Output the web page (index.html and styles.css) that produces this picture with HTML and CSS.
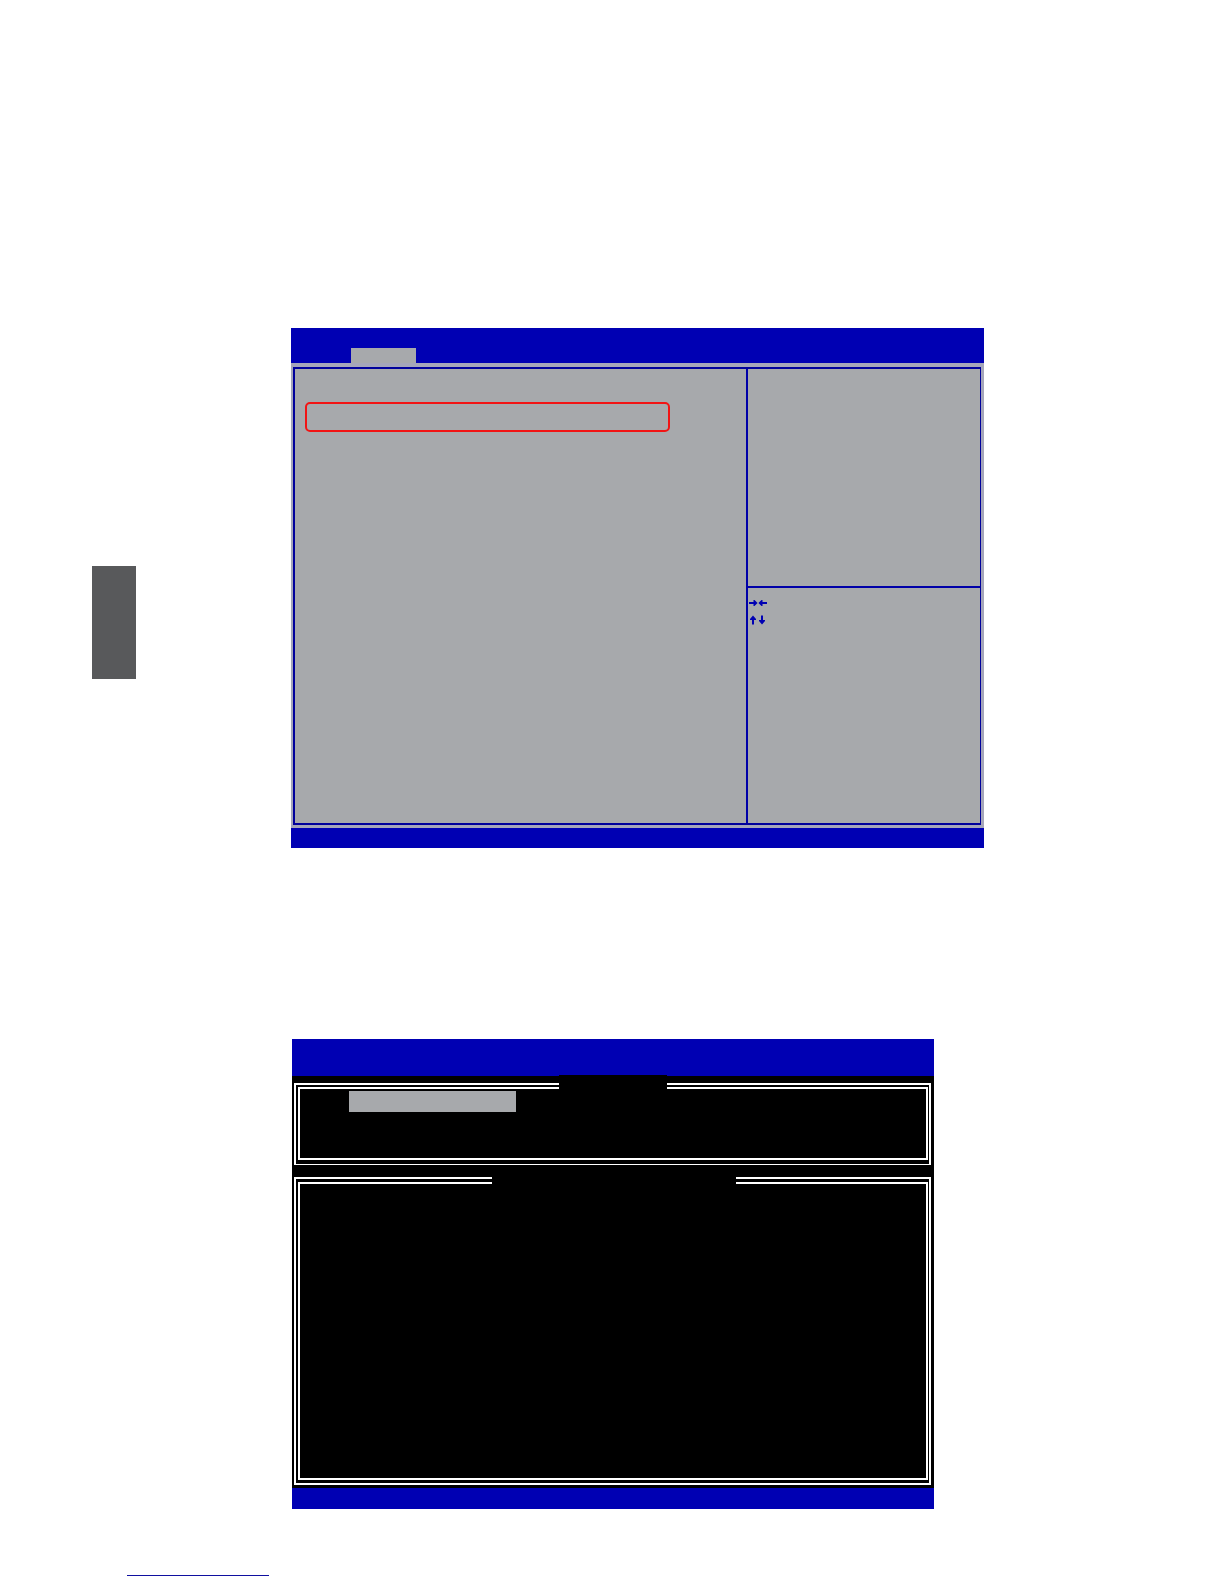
FILE: index.html
```
<!DOCTYPE html>
<html lang="en">
<head>
    <meta charset="UTF-8">
    <title>BIOS Setup</title>
    <link rel="stylesheet" href="styles.css">
</head>
<body>
    <div class="page">
        <aside class="side">
            <div class="chapter-tab"></div>
        </aside>

        <main class="content">
            <section class="bios">
                <header class="bios-header">
                    <div class="bios-tab"></div>
                </header>
                <div class="bios-body">
                    <div class="bios-frame">
                        <div class="settings">
                            <div class="highlight"></div>
                        </div>
                        <div class="help">
                            <div class="help-text"></div>
                            <div class="help-keys">
                                <svg class="arrows" width="18" height="10" viewBox="0 0 18 10" aria-hidden="true">
                                    <path d="M0 4h4.500V2H5.500L8.600 5 5.500 8H4.500V6H0zM18 4h-4.500V2h-1L9.400 5l3.100 3h1V6H18z"/>
                                </svg>
                                <svg class="arrows" width="18" height="10" viewBox="0 0 18 10" aria-hidden="true">
                                    <path d="M3 9.500V5H1V4L4 .5 7 4v1H5v4.500zM12 .5V5h-2v1l3 3.500L16 6V5h-2V.5z"/>
                                </svg>
                            </div>
                        </div>
                    </div>
                </div>
                <footer class="bios-footer"></footer>
            </section>

            <section class="console">
                <header class="console-header"></header>
                <div class="console-body">
                    <div class="double-frame">
                        <div class="frame-title"></div>
                        <div class="frame-inner frame-short">
                            <div class="selected"></div>
                        </div>
                    </div>
                    <div class="double-frame frame-options">
                        <div class="frame-title title-wide"></div>
                        <div class="frame-inner frame-tall"></div>
                    </div>
                </div>
                <footer class="console-footer"></footer>
            </section>
        </main>
    </div>

    <a class="page-link" href="#" aria-label="Link"></a>
</body>
</html>
```

FILE: styles.css
```
* {
    box-sizing: border-box;
}

body {
    margin: 0;
    background-color: #fff;
    font-family: "Liberation Sans", Arial, sans-serif;
}

.page {
    display: grid;
    grid-template-columns: 136px 1fr;
    column-gap: 155px;
}

.side {
    padding: 566px 0 0 92px;
}

.chapter-tab {
    height: 113px;
    background-color: #58595b;
}

.content {
    padding-top: 328px;
}

/* setup screen */
.bios {
    margin-right: 240px;
    background-color: #a7a9ac;
}

.bios-header {
    display: flex;
    align-items: flex-end;
    height: 35px;
    padding-left: 60px;
    background-color: #0000b3;
}

.bios-tab {
    width: 65px;
    height: 15px;
    background-color: #a7a9ac;
}

.bios-body {
    padding: 4px 3px 3px 2px;
    background-color: #a5a6ba;
}

.bios-frame {
    display: grid;
    grid-template-columns: 1fr 234px;
    min-height: 458px;
    border: 2px solid #00009c;
    border-right-width: 1px;
    background-color: #a7a9ac;
}

.settings {
    padding: 33px 76px 0 10px;
}

.highlight {
    height: 30px;
    border: 2px solid #f21414;
    border-radius: 5px;
}

.help {
    display: flex;
    flex-direction: column;
    border-left: 2px solid #0000a8;
}

.help-text {
    height: 219px;
    border-bottom: 2px solid #0000a8;
}

.help-keys {
    display: flex;
    flex-direction: column;
    gap: 7px;
    padding: 10px 1px;
}

.arrows {
    display: block;
    fill: #0000b3;
}

.bios-footer {
    height: 20px;
    background-color: #0000b3;
}

/* console screen */
.console {
    margin: 191px 290px 0 1px;
    background-color: #000;
}

.console-header {
    height: 37px;
    background-color: #0000b3;
}

.console-body {
    padding: 7px 3px 3px 2px;
}

.double-frame {
    position: relative;
    padding: 2px 1px 4px 2px;
    border: 2px solid #fff;
    border-bottom-width: 1px;
}

.frame-options {
    margin-top: 12px;
    padding: 3px 1px 3px 2px;
    border-bottom-width: 2px;
}

.frame-inner {
    border: 2px solid #fff;
}

.frame-short {
    height: 73px;
    padding: 2px 0 0 49px;
}

.frame-tall {
    height: 298px;
}

/* breaks the double line where the heading sits */
.frame-title {
    position: absolute;
    top: -10px;
    left: 263px;
    width: 108px;
    height: 18px;
    background-color: #000;
}

.title-wide {
    top: -4px;
    left: 196px;
    width: 244px;
    height: 14px;
}

.selected {
    width: 167px;
    height: 21px;
    background-color: #a7a9ac;
}

.console-footer {
    height: 21px;
    background-color: #0000b3;
}

.page-link {
    display: block;
    width: 142px;
    margin: 66px 0 0 127px;
    padding-bottom: 8px;
}

.page-link::before {
    content: "";
    display: block;
    height: 1px;
    background-color: #1010a0;
}
```
